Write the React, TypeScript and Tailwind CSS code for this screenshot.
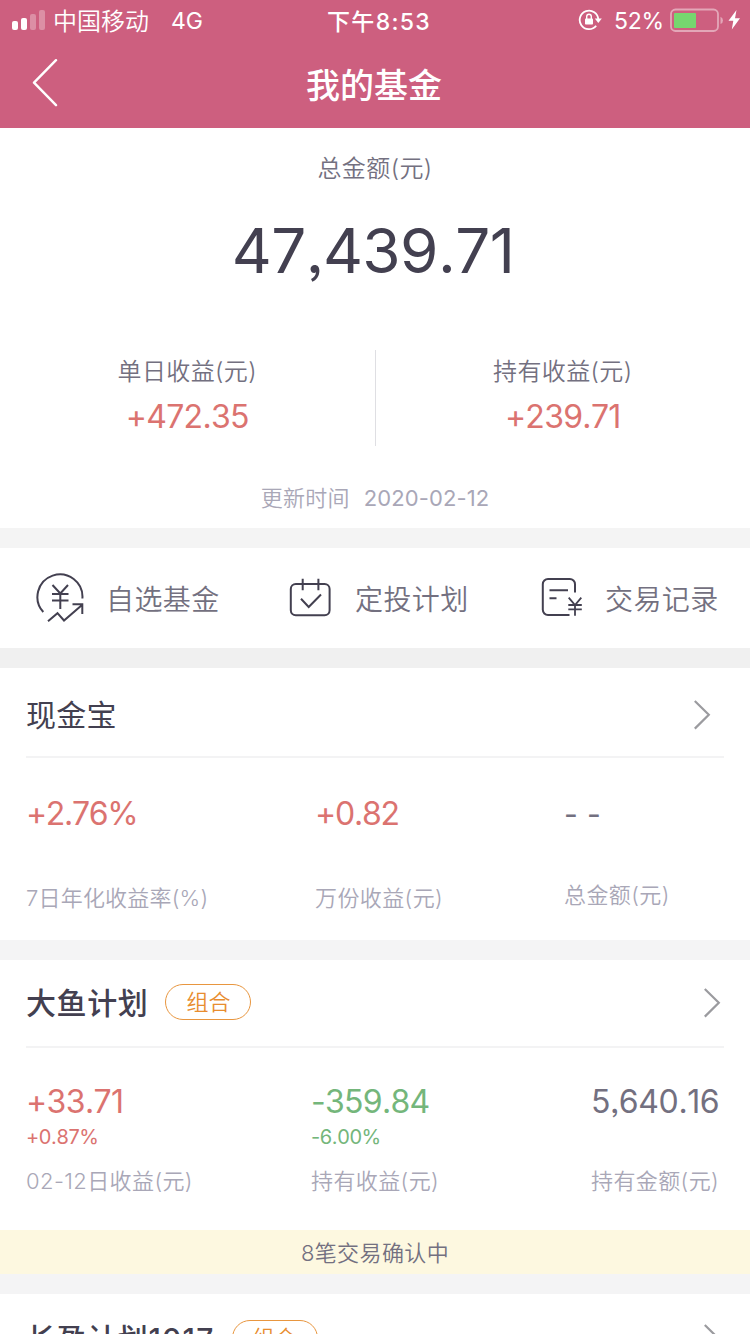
import type { ReactNode } from 'react'
import clsx from 'clsx'

type Metric = {
  readonly value: string
  readonly label: string
  readonly percent?: string
  readonly tone: 'up' | 'down' | 'plain'
}

const tones = {
  up: 'text-[#db7370] tracking-[-0.6px]',
  down: 'text-[#74b67b] tracking-[-0.7px]',
  plain: 'text-[#737080] tracking-[-0.4px]',
}

const planMetrics: Metric[] = [
  { value: '+33.71', percent: '+0.87%', label: '02-12日收益(元)', tone: 'up' },
  { value: '-359.84', percent: '-6.00%', label: '持有收益(元)', tone: 'down' },
  { value: '5,640.16', label: '持有金额(元)', tone: 'plain' },
]

function StatusBar() {
  return (
    <div className="flex h-10 items-center text-2xl leading-10">
      <div className="flex flex-1 items-center pl-3">
        <svg width="33" height="20" viewBox="0 0 33 20" fill="#fff">
          <rect x="0" y="11" width="6" height="9" rx="2" />
          <rect x="9" y="8" width="6" height="12" rx="2" />
          <rect x="18" y="4" width="6" height="16" rx="2" opacity="0.3" />
          <rect x="27" y="0" width="6" height="20" rx="2" opacity="0.3" />
        </svg>
        <span className="ml-2 pt-[3px] font-[350]">中国移动</span>
        <span className="ml-[22px] pt-0.5 text-[23px]">4G</span>
      </div>
      <span className="pt-[3px] pl-[5px] text-[23px] font-medium tracking-[1.3px]">下午8:53</span>
      <div className="flex flex-1 items-center justify-end pr-[9px]">
        <svg width="24" height="22" viewBox="0 0 24 22" fill="none" stroke="#fff" strokeWidth="1.8">
          <path d="M18.2 16.8A9.3 9.3 0 1 1 20.3 10.5" />
          <path d="M16.8 9.6h7l-3.5 4.4z" fill="#fff" stroke="none" />
          <rect x="7" y="9.5" width="8" height="6" rx="0.8" fill="#fff" stroke="none" />
          <path d="M8.7 10V7.6a2.3 2.3 0 0 1 4.6 0V10" strokeWidth="1.4" />
        </svg>
        <span className="ml-3 pt-0.5 text-[23px] tracking-[-0.2px]">52%</span>
        <svg className="ml-1.5" width="71" height="24" viewBox="0 0 71 24">
          <rect x="1" y="1.5" width="47" height="21.5" rx="4.5" fill="none" stroke="#fff" strokeOpacity="0.45" strokeWidth="1.8" />
          <rect x="4" y="5" width="22" height="15" rx="1" fill="#76d66f" />
          <path d="M50.5 8.7a4 4 0 0 1 0 7.4z" fill="#fff" opacity="0.45" />
          <path d="M66.5 2 58.5 12.7h4.8L61.8 21.5 70 10.3h-5z" fill="#fff" />
        </svg>
      </div>
    </div>
  )
}

function NavBar() {
  return (
    <div className="flex h-[86px] items-center justify-between px-8">
      <svg width="26" height="48" viewBox="0 0 26 48" fill="none" stroke="#fff" strokeWidth="2.4" strokeLinecap="round" strokeLinejoin="round">
        <path d="M24 1.2 2 23.7 24 46.2" />
      </svg>
      <h1 className="pt-1.5 pr-0.5 text-[34px] leading-[86px] font-medium">我的基金</h1>
      <span className="w-[26px]" />
    </div>
  )
}

function Earning({ label, value }: { label: string; value: string }) {
  return (
    <div className="flex-1 pt-[5px] text-center">
      <p className="text-2xl leading-[34px] font-[350] tracking-[0.4px] text-[#737080]">{label}</p>
      <p className="mt-2 text-[32px] leading-10 tracking-[-0.7px] text-[#db7370]">{value}</p>
    </div>
  )
}

function Summary() {
  return (
    <section className="h-[400px] pt-[25px] text-center">
      <p className="text-2xl leading-8 font-[350] tracking-[0.4px] text-[#737080]">总金额(元)</p>
      <p className="mt-[26px] pr-1 text-[62px] leading-[80px] tracking-[-0.6px] text-[#434050]">47,439.71</p>
      <div className="mt-[59px] flex h-24">
        <Earning label="单日收益(元)" value="+472.35" />
        <span className="w-px bg-[#dfdfe3]" />
        <Earning label="持有收益(元)" value="+239.71" />
      </div>
      <p className="mt-9 text-[22px] leading-8 font-[350] tracking-[0.3px] text-[#a9a7b7]">
        更新时间<span className="ml-3.5 font-normal tracking-[0.1px]">2020-02-12</span>
      </p>
    </section>
  )
}

function Shortcut({ icon, label, className }: { icon: ReactNode; label: string; className: string }) {
  return (
    <div className={clsx('flex w-[250px] items-center', className)}>
      {icon}
      <span className="pt-[3px] text-[28px] leading-10 font-[350] tracking-[0.4px] text-[#737080]">{label}</span>
    </div>
  )
}

function Shortcuts() {
  return (
    <nav className="flex h-[100px] items-center">
      <Shortcut
        className="gap-[22px] pl-9"
        label="自选基金"
        icon={
          <svg width="48" height="50" viewBox="0 0 48 50" fill="none" stroke="#434050" strokeWidth="2">
            <path d="M46.4 25.5A22.5 22.5 0 1 0 7.3 39" />
            <path d="M16.5 12 24.3 20.5 32 12M24.3 20v16M16 21h16.5M16 27.5h16.5" />
            <path d="M12 48.2 21.5 40.2 28 47.5 46 32M36.5 31.2H46.3V41" />
          </svg>
        }
      />
      <Shortcut
        className="gap-6 pl-[39px]"
        label="定投计划"
        icon={
          <svg width="42" height="40" viewBox="0 0 42 40" fill="none" stroke="#434050" strokeWidth="2">
            <rect x="1.8" y="6" width="38.8" height="31.2" rx="5" />
            <path d="M13.7 0.7v11.6M29.4 0.7v11.6M12 20.8 19.7 29 32 16.5" />
          </svg>
        }
      />
      <Shortcut
        className="gap-[22px] pl-10"
        label="交易记录"
        icon={
          <svg width="43" height="40" viewBox="0 0 43 40" fill="none" stroke="#434050" strokeWidth="2">
            <path d="M35 14.6V6.2A5.2 5.2 0 0 0 29.8 1H8A5.2 5.2 0 0 0 2.8 6.2V31.8A5.2 5.2 0 0 0 8 37H29.5" />
            <path d="M9.5 12.2h18.5M9.5 20.2h7" />
            <path d="M28.7 19.7 35 27 41.3 19.7M35 27v10.8M28.3 27h13.5M28.3 31.3h13.5" strokeWidth="1.8" />
          </svg>
        }
      />
    </nav>
  )
}

function Chevron() {
  return (
    <svg width="18" height="32" viewBox="0 0 18 32" fill="none" stroke="#9b9b9f" strokeWidth="2.2">
      <path d="M0.8 2 14.8 15.8 0.8 29.6" />
    </svg>
  )
}

function Tag() {
  return (
    <span className="mb-0.5 ml-[17px] flex h-9 w-[86px] items-center justify-center rounded-full border border-[#e8963f] text-[22px] leading-none font-[350] text-[#e88d2f]">
      组合
    </span>
  )
}

function PlanHeader({ title }: { title: ReactNode }) {
  return (
    <div className="flex items-center justify-between pr-7 pl-[26px]">
      <div className="flex items-center">
        <h2 className="text-[30px] leading-[42px] font-medium tracking-[0.6px] text-[#434050]">{title}</h2>
        <Tag />
      </div>
      <Chevron />
    </div>
  )
}

function CashCard() {
  return (
    <section className="h-[272px]">
      <div className="flex h-[88px] items-center justify-between pt-[5px] pr-[38px] pl-[26px]">
        <h2 className="text-[30px] leading-[42px] tracking-[0.3px] text-[#434050]">现金宝</h2>
        <Chevron />
      </div>
      <div className="mx-[26px] h-0.5 bg-[#f3f3f4]" />
      <div className="grid grid-cols-[289px_249px_1fr] pt-9 pl-[26px] text-[22px] leading-8 font-[350] tracking-[0.4px] text-[#a9a7b7]">
        <div>
          <p className="text-[32px] leading-10 font-normal tracking-[-1.3px] text-[#db7370]">+2.76%</p>
          <p className="mt-12 tracking-[0.2px]">7日年化收益率(%)</p>
        </div>
        <div>
          <p className="text-[32px] leading-10 font-normal tracking-[-1.2px] text-[#db7370]">+0.82</p>
          <p className="mt-12">万份收益(元)</p>
        </div>
        <div>
          <p className="text-[30px] leading-10 font-normal text-[#737080]">- -</p>
          <p className="mt-[45px]">总金额(元)</p>
        </div>
      </div>
    </section>
  )
}

function PlanCard() {
  return (
    <section className="h-[270px] pt-[22px]">
      <PlanHeader title="大鱼计划" />
      <div className="mx-[26px] mt-[22px] h-0.5 bg-[#f3f3f4]" />
      <div className="grid grid-cols-[285px_280px_1fr] pt-[34px] pl-[26px]">
        {planMetrics.map((metric) => (
          <div key={metric.label}>
            <p className={clsx('text-[32px] leading-10', tones[metric.tone])}>{metric.value}</p>
            <p className={clsx('mt-[3px] h-6 text-[20px] leading-6', tones[metric.tone])}>
              <span className="tracking-[-0.4px]">{metric.percent}</span>
            </p>
            <p className="mt-4 text-[22px] leading-8 font-[350] tracking-[0.4px] text-[#a9a7b7]">{metric.label}</p>
          </div>
        ))}
      </div>
    </section>
  )
}

export default function App() {
  return (
    <div className="h-[1334px] w-[750px] overflow-hidden bg-white font-['Inter','Noto_Sans_CJK_SC',sans-serif] whitespace-nowrap [font-feature-settings:'ss03'] [font-kerning:none]">
      <header className="h-32 bg-[#cd5f7f] text-white">
        <StatusBar />
        <NavBar />
      </header>
      <Summary />
      <div className="h-5 bg-[#f4f4f4]" />
      <Shortcuts />
      <div className="h-5 bg-[#f0f0f0]" />
      <CashCard />
      <div className="h-5 bg-[#f4f4f5]" />
      <PlanCard />
      <div className="h-11 bg-[#fdf8e0] text-center text-[22px] leading-[46px] font-[350] tracking-[0.4px] text-[#737080]">
        8笔交易确认中
      </div>
      <div className="h-5 bg-[#f4f4f5]" />
      <section className="pt-6">
        <PlanHeader
          title={
            <>
              长盈计划<span className="tracking-[1.2px]">1017</span>
            </>
          }
        />
      </section>
    </div>
  )
}
